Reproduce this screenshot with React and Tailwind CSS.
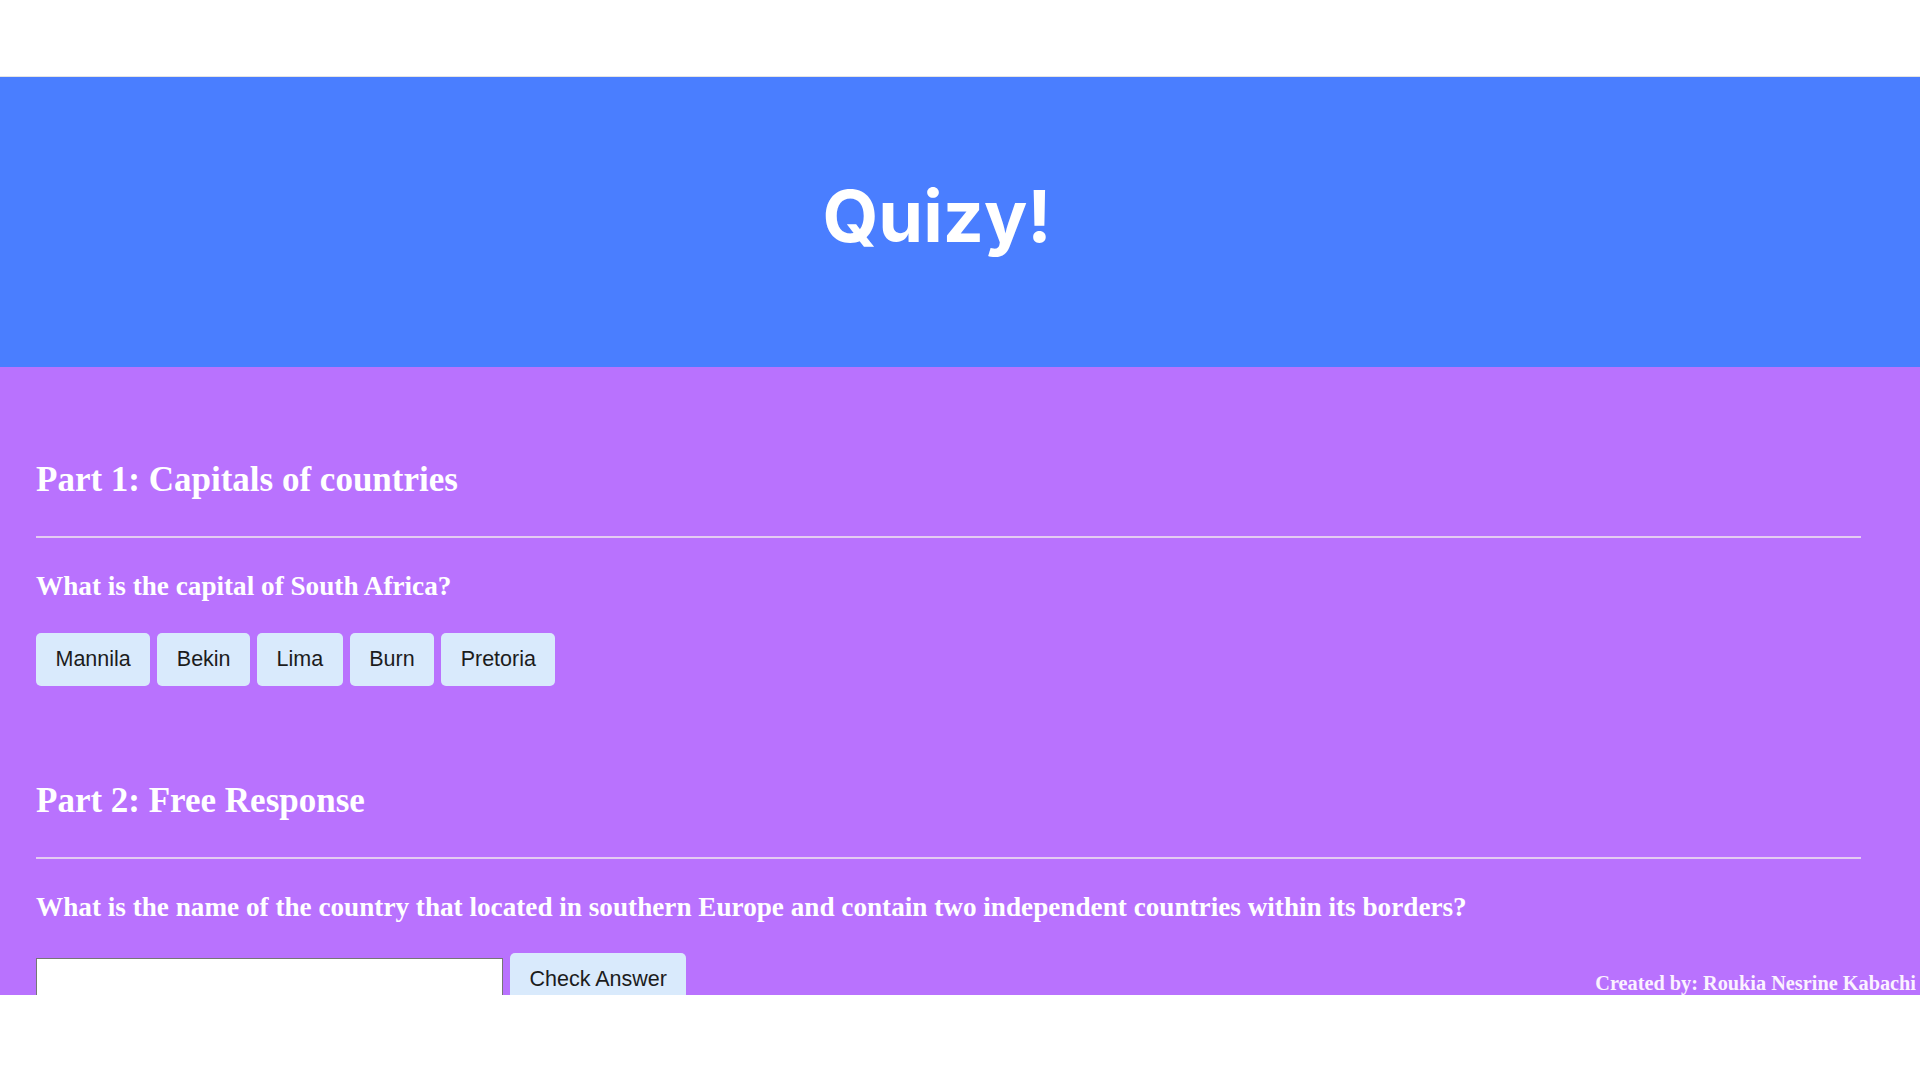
const serif = "font-['Liberation_Serif','Times_New_Roman',serif]";
const sans = "font-['Liberation_Sans',Arial,sans-serif]";

const choices = ["Mannila", "Bekin", "Lima", "Burn", "Pretoria"];

const AnswerButton = ({ children }) => (
  <button
    type="button"
    className={`${sans} h-[53px] rounded-[5px] bg-[#d9eafc] px-[19.5px] text-[21.5px] leading-none text-[#1c1c1c]`}
  >
    {children}
  </button>
);

const Divider = () => (
  <div className="mr-[59px] h-[2px] bg-[#e4ccf2]" />
);

export default function App() {
  return (
    <div className="h-[1080px] w-[1920px] overflow-hidden bg-white">
      <div className="h-[77px] border-b border-[#e4e4e4]" />

      <div className="flex h-[918px] flex-col overflow-hidden">
        <header className="flex h-[290px] shrink-0 justify-center bg-[#4a7eff] pr-[46px] pt-[103px]">
          <h1 className="font-['Inter',sans-serif] text-[72px] font-bold leading-none text-white">
            Quizy!
          </h1>
        </header>

        <main className={`${serif} flex-1 bg-[#b972fe] pl-[36px] pt-[93px] text-white`}>
          <section>
            <h2 className="text-[35px] font-bold leading-[39px]">
              Part 1: Capitals of countries
            </h2>
            <div className="mt-[37px]">
              <Divider />
            </div>
            <h3 className="mt-[33px] text-[27.2px] font-bold leading-[30px]">
              What is the capital of South Africa?
            </h3>
            <div className="mt-[32px] flex gap-[7px]">
              {choices.map((c) => (
                <AnswerButton key={c}>{c}</AnswerButton>
              ))}
            </div>
          </section>

          <section className="mt-[95px]">
            <h2 className="text-[35px] font-bold leading-[39px]">
              Part 2: Free Response
            </h2>
            <div className="mt-[37px]">
              <Divider />
            </div>
            <h3 className="mt-[33px] text-[27.2px] font-bold leading-[30px]">
              What is the name of the country that located in southern Europe and contain two independent countries within its borders?
            </h3>
            <div className="mt-[31px] flex items-start gap-[7px]">
              <input
                type="text"
                className="mt-[5px] h-[46px] w-[467px] border border-[#767676] bg-white"
              />
              <AnswerButton>Check Answer</AnswerButton>
              <p className="ml-auto mt-[19px] pr-[4px] text-[20.3px] font-bold leading-[22px] text-[#fbf2ff]">
                Created by: Roukia Nesrine Kabachi
              </p>
            </div>
          </section>
        </main>
      </div>
    </div>
  );
}
